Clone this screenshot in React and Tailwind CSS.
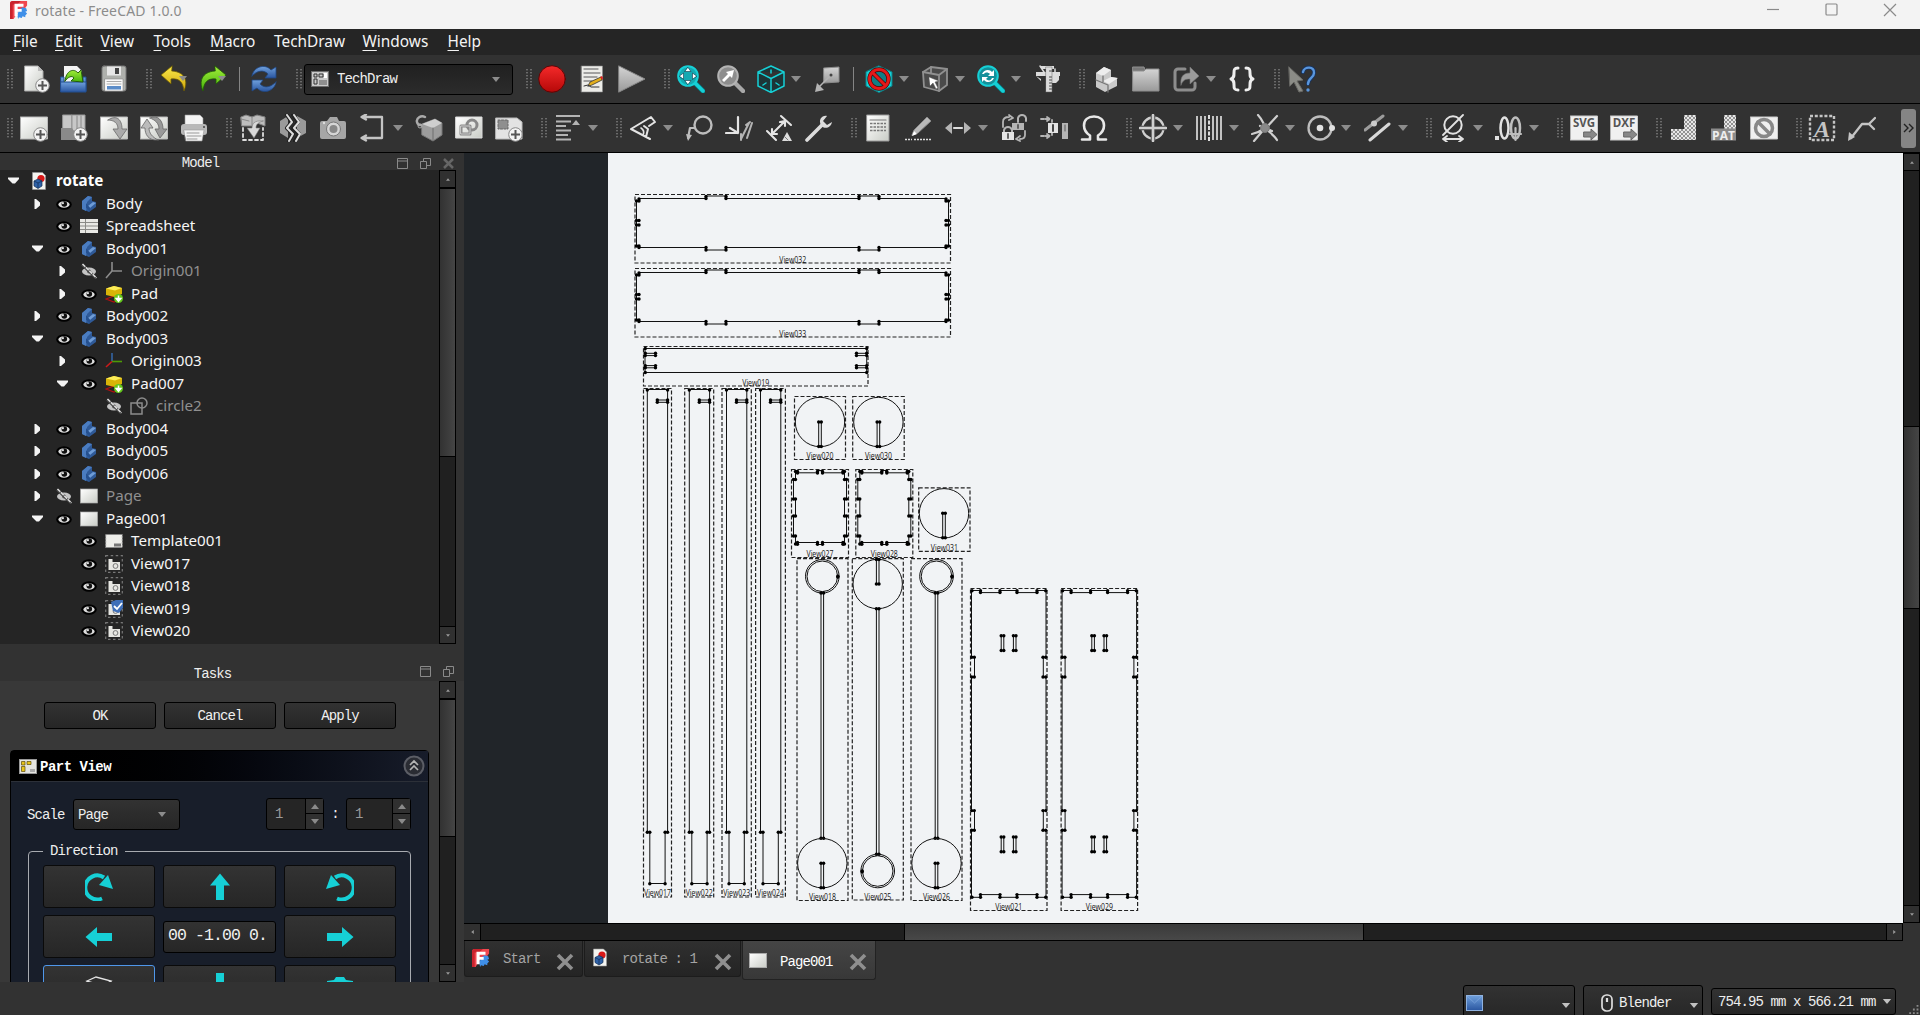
import React from "react";

/* ---------- toolbar primitives ---------- */

function Icon({ children, className = "" }) {
  return (
    <svg viewBox="0 0 28 28" className={"ml-3 h-7 w-7 shrink-0 " + className} fill="none" strokeLinecap="round" strokeLinejoin="round">
      {children}
    </svg>
  );
}

function Handle({ first }) {
  const dots = [];
  for (let r = 0; r < 7; r++) {
    for (let c = 0; c < 2; c++) {
      dots.push(<rect key={r + "-" + c} x={c * 4} y={r * 3} width="2" height="1.4" fill="#6a6a6a" />);
    }
  }
  return (
    <svg viewBox="0 0 6 20" className={(first ? "ml-[7px]" : "ml-[18px]") + " mr-[-5px] h-5 w-1.5 shrink-0"}>
      {dots}
    </svg>
  );
}

function Drop() {
  return (
    <svg viewBox="0 0 10 6" className="ml-1.5 h-1.5 w-2.5 shrink-0">
      <path d="M0 0h10L5 6z" fill="#8c8c8c" />
    </svg>
  );
}

function Sep() {
  return <div className="ml-3 h-6 w-px shrink-0 bg-[#858585]" />;
}

const G = "#b4b4b4";
const L = "#e4e4e4";
const C = "#16d0d6";

function Plus() {
  return (
    <g>
      <circle cx="20.5" cy="20.5" r="6.8" fill="#f2f2f2" stroke="#8a8a8a" />
      <path d="M20.5 16v9M16 20.5h9" stroke="#555" strokeWidth="2" strokeLinecap="butt" />
    </g>
  );
}

function Defs() {
  return (
    <svg className="absolute h-0 w-0">
      <defs>
        <linearGradient id="paper" x1="0" y1="0" x2="1" y2="1">
          <stop offset="0" stopColor="#ffffff" />
          <stop offset="1" stopColor="#c9ccc6" />
        </linearGradient>
        <linearGradient id="steel" x1="0" y1="0" x2="0" y2="1">
          <stop offset="0" stopColor="#d4d4d4" />
          <stop offset="1" stopColor="#9a9a9a" />
        </linearGradient>
        <linearGradient id="red" x1="0" y1="0" x2="0" y2="1">
          <stop offset="0" stopColor="#f52a2a" />
          <stop offset="1" stopColor="#b50808" />
        </linearGradient>
        <linearGradient id="blue" x1="0" y1="0" x2="0" y2="1">
          <stop offset="0" stopColor="#6fa0dc" />
          <stop offset="1" stopColor="#2a56a0" />
        </linearGradient>
        <linearGradient id="yellow" x1="0" y1="0" x2="0" y2="1">
          <stop offset="0" stopColor="#fbe94a" />
          <stop offset="1" stopColor="#d0a60a" />
        </linearGradient>
        <linearGradient id="green" x1="0" y1="0" x2="0" y2="1">
          <stop offset="0" stopColor="#a2ee3a" />
          <stop offset="1" stopColor="#46b20c" />
        </linearGradient>
        <pattern id="hatch" width="4" height="4" patternUnits="userSpaceOnUse">
          <rect width="4" height="4" fill="#e8e8e8" />
          <path d="M0 0L4 4M4 0L0 4" stroke="#7d7d7d" strokeWidth=".8" />
        </pattern>
      </defs>
    </svg>
  );
}

/* ---------- first toolbar ---------- */

function FileToolbar() {
  return (
    <div className="flex h-12 items-center">
      <Handle first />
      <Icon className="ml-[14px]">
        <path d="M3 1h13l5 5v20H3z" fill="url(#paper)" stroke="#aaa" />
        <path d="M16 1v5h5z" fill="#bbb" />
        <Plus />
      </Icon>
      <Icon className="ml-[10px]">
        <path d="M4 1h13l5 5v12H4z" fill="#f4f4f4" />
        <path d="M1 12h3v6h19v-6h3v14H1z" fill="url(#blue)" stroke="#234e90" />
        <path d="M1 17h25v10H1z" fill="url(#blue)" stroke="#234e90" />
        <path d="M5 16C6 5 14 3 18 8l3-3 2 12-12-1 3-3c-2-3-6-1-9 3z" fill="url(#green)" stroke="#226005" />
      </Icon>
      <Icon>
        <rect x="2" y="1" width="24" height="25" rx="2" fill="#aeb0ac" stroke="#777" />
        <rect x="7" y="1.5" width="14" height="9" fill="#e6e6e6" />
        <rect x="15" y="3" width="4" height="6" fill="#444" />
        <rect x="5" y="14" width="18" height="12" fill="#fafafa" stroke="#888" strokeWidth=".6" />
        <path d="M7 16.500h14M7 19h14" stroke="#aaa" />
        <rect x="7" y="21" width="14" height="3.500" fill="#5b8cc8" />
      </Icon>
      <Handle />
      <Icon className="ml-[13px]">
        <path d="M12 1L1 10l10 9v-5c9-1 12 4 13 12 4-9 2-19-12-20z" fill="url(#yellow)" stroke="#6b5a04" strokeWidth=".8" />
        <path d="M19 11h8l-4 5z" fill="#8c8c8c" />
      </Icon>
      <Icon className="ml-[11px]">
        <path d="M16 1l11 9-10 9v-5C8 13 5 18 4 26 0 17 2 7 16 6z" fill="url(#green)" stroke="#1f5c04" strokeWidth=".8" />
        <path d="M19 11h8l-4 5z" fill="#8c8c8c" />
      </Icon>
      <Sep />
      <Icon className="ml-[10px]">
        <path d="M2 11C3 2 15-2 21 5l5-3v11H15l3-4c-5-5-11-3-16 2z" fill="url(#blue)" stroke="#1f4784" strokeWidth=".8" />
        <path d="M26 17c-1 9-13 13-19 6l-5 3V15h11l-3 4c5 5 11 3 16-2z" fill="url(#blue)" stroke="#1f4784" strokeWidth=".8" />
      </Icon>
      <Handle />
      <div className="mr-[-5px] ml-[7px] flex h-[31px] w-[209px] shrink-0 items-center rounded-[3px] border border-black bg-linear-to-b from-[#202020] to-[#2c2c2c] pl-1.5">
        <svg viewBox="0 0 18 16" className="h-4 w-[18px]">
          <rect x=".5" y=".5" width="17" height="15" fill="#c9c9c9" stroke="#6d6d6d" />
          <path d="M3 3h3v3H3zM8 3h4v3H8zM3 8h3v5H3z" fill="none" stroke="#333" />
          <rect x="13" y="2" width="3" height="5" fill="#fff" />
          <rect x="8" y="9" width="8" height="5" fill="#8f8f8f" />
        </svg>
        <span className="mt-px ml-2 font-['Liberation_Mono',monospace] text-[14px] tracking-[-0.9px] text-[#eee]">TechDraw</span>
        <svg viewBox="0 0 10 6" className="mr-3 ml-auto h-[5px] w-2">
          <path d="M0 0h10L5 6z" fill="#8c8c8c" />
        </svg>
      </div>
      <Handle />
      <Icon className="ml-[11px]">
        <circle cx="14" cy="14" r="13.300" fill="url(#red)" stroke="#5c0606" />
      </Icon>
      <Icon>
        <rect x="3.500" y="1" width="21" height="26" fill="#ecece8" stroke="#888" strokeWidth=".6" />
        <path d="M6 4h14M6 8h16M6 12h13M6 16h8" stroke="#888" strokeWidth="1.300" />
        <path d="M10 21l2-4 11-5 1 3-10 5z" fill="#e2ae1c" stroke="#333" strokeWidth=".8" />
        <path d="M22 12l2 3 1-2-1-2z" fill="#d22" />
        <path d="M6 21l4-1 3 2h8" stroke="#333" />
      </Icon>
      <Icon>
        <path d="M1 1l26 13L1 27z" fill="url(#steel)" stroke="#888" />
      </Icon>
      <Handle />
      <Icon>
        <path d="M18 18l8 8" stroke="#067a80" strokeWidth="5" />
        <path d="M18 18l8 8" stroke={C} strokeWidth="3.500" />
        <circle cx="11" cy="11" r="9.800" fill="#14a9b2" stroke={C} strokeWidth="2" />
        <path d="M11 2.500l3 4h-6zM11 19.500l3-4h-6zM2.500 11l4-3v6zM19.500 11l-4-3v6z" fill="#fff" stroke="#134" strokeWidth=".6" />
      </Icon>
      <Icon>
        <path d="M18 18l8 8" stroke="#a8a8a8" strokeWidth="4.500" />
        <circle cx="11" cy="11" r="9.800" fill="#8d8d8d" stroke="#b4b4b4" strokeWidth="2" />
        <path d="M5 15l6-6-2-2 8-2-2 8-2-2-6 6z" fill="#fff" />
      </Icon>
      <Icon>
        <path d="M14 1l13 6v14l-13 6.500L1 21V7z M1 7l13 6.500L27 7M14 13.500V27" stroke={C} strokeWidth="1.500" fill="#1d3537" />
        <path d="M14 5v3M6 20l3-2M19 18l3 2" stroke={C} strokeWidth="1.500" />
      </Icon>
      <Drop />
      <Icon>
        <path d="M11 3l15-1v15l-15 1z" fill="url(#steel)" stroke="#8b8b8b" />
        <path d="M18 10L5 23" stroke={G} strokeWidth="1.500" />
        <path d="M2 27l2-9 7 7z" fill={G} />
        <circle cx="18" cy="10" r="1.500" fill="#444" />
      </Icon>
      <Sep />
      <Icon className="ml-[11px]">
        <path d="M14 1l13 6v14l-13 6.500L1 21V7z" fill={C} stroke="#0b8288" />
        <circle cx="14" cy="14" r="9.500" stroke="#4b0505" strokeWidth="4.300" fill="#117f86" />
        <path d="M7.500 7.500l13 13" stroke="#4b0505" strokeWidth="4.300" />
        <circle cx="14" cy="14" r="9.500" stroke="#e51919" strokeWidth="3" />
        <path d="M7.500 7.500l13 13" stroke="#e51919" strokeWidth="3" />
      </Icon>
      <Drop />
      <Icon>
        <path d="M2 7l8-5 16 2v16l-8 6L3 22z" fill="#4a4a4a" stroke="#909090" strokeWidth="1.800" />
        <path d="M2 7l16 3 8-6M18 10v16M10 2v6" stroke="#909090" strokeWidth="1.800" />
        <path d="M8 12l10 4-4 1 3 6-2 1-3-6-3 3z" fill="#fff" stroke="#555" strokeWidth=".5" />
      </Icon>
      <Drop />
      <Icon>
        <path d="M18 18l8 8" stroke="#067a80" strokeWidth="5" />
        <path d="M18 18l8 8" stroke={C} strokeWidth="3.500" />
        <circle cx="11" cy="11" r="9.800" fill="#14909a" stroke={C} strokeWidth="2" />
        <path d="M5 9c2-5 8-5 10-2l2-2v6h-6l2-2c-2-2-5-2-6 0zM17 13c-2 5-8 5-10 2l-2 2v-5h6l-2 2c2 2 5 2 6-1z" fill="#fff" />
      </Icon>
      <Drop />
      <Icon>
        <path d="M8 1h13v3H8zM3 7h24v4H3zM3 11l5 3v2zM18 18h5l3-3v-4h-8z" fill="#dcdcdc" />
        <path d="M7 1l4 6M22 4v3" stroke="#dcdcdc" strokeWidth="1.500" />
        <rect x="13" y="2" width="6" height="25" fill="#dcdcdc" stroke="#666" strokeWidth=".5" />
        <path d="M16.500 6h2M16.500 12h2M16.500 15h2M16.500 18h2M16.500 21h2M16.500 24h2" stroke="#444" />
      </Icon>
      <Handle />
      <Icon>
        <path d="M4 8l8-6 7 3v7l6 1v8l-12 6-9-5z" fill="#c9c9c9" />
        <path d="M4 8l8-6 7 3-8 6z M11 16l8-4 7 1-9 6z" fill="#ededed" />
        <path d="M11 11v6M4 15l12 5v7" stroke="#777" strokeWidth="1.300" />
      </Icon>
      <Icon>
        <path d="M1 2h11l2 5H1z" fill="#777" stroke="#8f8f8f" />
        <path d="M1 6h11l2-2h13v22H1z" fill="url(#steel)" stroke="#8f8f8f" />
      </Icon>
      <Icon>
        <path d="M13 4H6a3 3 0 00-3 3v15a3 3 0 003 3h14a3 3 0 003-3v-4" stroke="#8d8d8d" strokeWidth="3" />
        <path d="M9 20C8 12 11 8 18 8V2l9 9-9 8v-5c-5 0-7 1-9 6z" fill="#9b9b9b" stroke="#777" strokeWidth=".6" />
      </Icon>
      <Drop />
      <Icon>
        <path d="M10 3C6 3 6 5 6 8s0 5-3 6c3 1 3 3 3 6s0 5 4 5M18 3c4 0 4 2 4 5s0 5 3 6c-3 1-3 3-3 6s0 5-4 5" stroke="#eee" strokeWidth="3" />
      </Icon>
      <Handle />
      <Icon className="ml-[13px]">
        <path d="M1 2l14 13-6 1 6 10-4 1-5-10-4 4z" fill="#8b8c87" stroke="#6a6a66" />
        <path d="M15 7c1-6 12-6 11 1 0 5-6 5-6 11" stroke="#16335f" strokeWidth="4" />
        <path d="M15 7c1-6 12-6 11 1 0 5-6 5-6 11" stroke="#5a96dc" strokeWidth="2.400" />
        <circle cx="20" cy="25" r="1.700" fill="#5a96dc" />
      </Icon>
    </div>
  );
}

/* ---------- second toolbar ---------- */

function DrawToolbar() {
  return (
    <div className="flex h-12 items-center">
      <Handle first />
      <Icon>
        <rect x=".5" y="3" width="27" height="22" fill="url(#paper)" stroke="#bbb" />
        <Plus />
      </Icon>
      <Icon>
        <path d="M3 1h9v16H3zM12 1h13v16H12z" fill="#c7c7c7" stroke="#999" />
        <path d="M17 2v14M21 2v14" stroke="#888" />
        <path d="M1 14h11l2 3h12v9H1z" fill="#8a8a8a" />
        <Plus />
      </Icon>
      <Icon>
        <rect x=".5" y="3" width="27" height="22" fill="url(#paper)" stroke="#bbb" />
        <path d="M8 6c9-6 14 0 14 9h5l-7 10-7-10h5c0-6-4-9-10-9z" fill="#aaa" stroke="#6a6a6a" strokeWidth=".8" />
      </Icon>
      <Icon>
        <rect x=".5" y="3" width="27" height="22" fill="url(#paper)" stroke="#bbb" />
        <path d="M10 4c8-4 13 3 13 11h4l-7 9-5-9h4c0-6-4-9-9-11z" fill="#999" stroke="#666" strokeWidth=".8" />
        <path d="M18 26C8 27 5 20 5 14H1l6-9 6 9H9c0 5 3 9 9 12z" fill="#bbb" stroke="#666" strokeWidth=".8" />
      </Icon>
      <Icon>
        <path d="M5 12V1h15l3 3v8z" fill="#f4f4f4" stroke="#999" strokeWidth=".6" />
        <rect x="1" y="10" width="26" height="11" rx="3" fill="#b9b9b9" />
        <path d="M4 16h20l-2 11H6z" fill="#f4f4f4" stroke="#999" strokeWidth=".6" />
        <path d="M7 19h12M7 22h14M7 25h10" stroke="#999" />
        <circle cx="24" cy="13" r="1" fill="#444" />
      </Icon>
      <Handle />
      <Icon>
        <path d="M2 3l5-2 6 2 5-2 8 2v9L18 9l-5 3H3z" fill="#bdbdbd" stroke="#808080" />
        <path d="M13 3v8M2 5l8 2" stroke="#888" />
        <path d="M4 14v12h20V14" stroke="#ddd" strokeWidth="1.800" strokeDasharray="3 3" />
        <path d="M24 7c-9-1-11 3-11 7h-5l7 10 6-10h-4c0-4 3-6 7-7z" fill="#d8d8d8" stroke="#777" strokeWidth=".6" />
      </Icon>
      <Icon>
        <path d="M1 7l8-5v22l-8-5zM27 7l-9-5v22l9-5z" fill="#9a9a9a" />
        <path d="M8 1l5 7-5 6 6 6-4 7M14 1l5 7-5 6 6 6-4 7" stroke="#222" strokeWidth="4" />
        <path d="M8 1l5 7-5 6 6 6-4 7M15 1l5 7-5 6 6 6-4 7" stroke="#ddd" strokeWidth="2" />
      </Icon>
      <Icon>
        <path d="M3 7h5l3-4h7l2 4h5q2 0 2 2v14q0 2-2 2H3q-2 0-2-2V9q0-2 2-2z" fill="#a6a6a6" />
        <circle cx="14.500" cy="15" r="7" fill="#d5d5d5" stroke="#777" />
        <circle cx="14.500" cy="15" r="4" fill="#888" />
        <circle cx="5" cy="9" r="1.200" fill="#ddd" />
      </Icon>
      <Icon>
        <path d="M5 3h18v21H5M7 .500L2.500 3 7 5.500M7 21.500L2.500 24 7 26.500" stroke="#c4c4c4" strokeWidth="2.300" />
      </Icon>
      <Drop />
      <Icon>
        <path d="M7 10l13-5 7 4v12l-9 6-11-6z" fill="#9c9c9c" stroke="#777" />
        <path d="M7 10l13-5 7 4-9 5z" fill="#cfcfcf" />
        <path d="M18 14v12" stroke="#6f6f6f" />
        <path d="M10 3C6 1 1 4 2 8s3 3 4 3" stroke="#aaa" strokeWidth="2.500" />
        <circle cx="5" cy="12" r="2" stroke="#aaa" />
      </Icon>
      <Icon>
        <rect x="1" y="3" width="26" height="21" fill="url(#paper)" stroke="#ddd" />
        <path d="M6 12h9v8H6z" stroke="#888" strokeWidth="3" />
        <circle cx="17" cy="11" r="5" stroke="#888" strokeWidth="3" />
        <path d="M6 12h9v8H6z" stroke="#ccc" />
      </Icon>
      <Icon>
        <path d="M1 4h21l5 4v17H1z" fill="#e3e3e3" stroke="#bbb" />
        <rect x="3" y="6" width="10" height="9" fill="#8f8f8f" stroke="#666" strokeDasharray="2 1.500" />
        <Plus />
      </Icon>
      <Handle />
      <Icon>
        <path d="M2 2h24M2 7.500h15M2 12h10M2 16.500h15M2 21h12M2 25.500h15" stroke={G} strokeWidth="2" strokeLinecap="butt" />
        <path d="M18 11l4-5 4 5z" fill={G} />
      </Icon>
      <Drop />
      <Handle />
      <Icon>
        <path d="M2 15L22 3l4 5-6 4M2 15l19 10M15 12l4 3-2 8" stroke={L} strokeWidth="2" />
        <path d="M12 14c3 2 3 5 2 7" stroke={L} strokeWidth="1.600" />
      </Icon>
      <Drop />
      <Icon>
        <circle cx="18" cy="11" r="8.500" stroke="#bdbdbd" strokeWidth="2.400" />
        <path d="M10 14H5L3 24" stroke="#bdbdbd" strokeWidth="2.200" />
        <path d="M1 20l2 7 4-6z" fill="#bdbdbd" />
      </Icon>
      <Icon>
        <path d="M13 3v16H1M13 19l-8-5" stroke={L} strokeWidth="2.200" />
        <path d="M16 25L24 9M22 24L27 9M21 11l4-3M16 20v6" stroke={G} strokeWidth="2" />
      </Icon>
      <Icon>
        <path d="M16 2l10 9M2 17l9 9M7 20L20 7M20 7l-5 1M20 7v5M7 20v-5M7 20h5" stroke={L} strokeWidth="2.100" />
        <path d="M22 18l5 9H17z" fill="#ddd" />
        <path d="M20 23l3 3" stroke="#777" />
      </Icon>
      <Icon>
        <path d="M2 26L17 11" stroke="#dcdcdc" strokeWidth="3.600" />
        <path d="M22 2c-5-1-9 4-6 9s10 3 11-3l-5 3-4-4z" fill="#dcdcdc" />
      </Icon>
      <Handle />
      <Icon>
        <rect x="3" y="1" width="22" height="26" fill="url(#paper)" stroke="#999" />
        <path d="M6 6h16" stroke="#777" strokeWidth="1.200" />
        <path d="M6 9.500h16M6 13h16M6 16.500h16" stroke="#777" strokeWidth="1.300" strokeDasharray="2.500 1" strokeLinecap="butt" />
      </Icon>
      <Icon>
        <path d="M1 25.500h7M10 25.500h17" stroke="#ddd" strokeWidth="1.700" strokeDasharray="2 1" strokeLinecap="butt" />
        <path d="M8 21l2-5L23 3l4 4-13 12z" fill="#b9b9b9" stroke="#888" />
        <path d="M8 22l2-5 3 3z" fill="#fff" />
      </Icon>
      <Icon>
        <path d="M1 14l7-6v12zM27 14l-7-6v12z" fill={G} />
        <path d="M10 14h8" stroke="#ddd" strokeWidth="2.200" />
      </Icon>
      <Drop />
      <Icon>
        <path d="M3 13V8q0-5 6-5M9 1l4 3-4 2M25 17v4q0 4-5 4M20 22l-4 3 4 2" stroke={G} strokeWidth="1.800" />
        <path d="M18 8V4q1-3 4-3t4 3v3M4 18v-2q1-3 4-3t4 3v2" stroke={G} strokeWidth="2" />
        <rect x="12" y="9" width="12" height="7" fill={G} />
        <rect x="2" y="18" width="12" height="8" fill={L} />
        <path d="M8 20v4M18 11v3" stroke="#555" strokeWidth="1.800" />
      </Icon>
      <Icon>
        <path d="M1 5h8M7 3l3 2-3 2M1 22h8M7 20l3 2-3 2M12 8V6M12 21v-2" stroke={G} strokeWidth="1.800" strokeDasharray="3 1.500" />
        <rect x="8" y="9" width="10" height="10" fill={L} />
        <path d="M13 11v6" stroke="#444" strokeWidth="2" />
        <rect x="22" y="9" width="6" height="16" fill={G} />
        <path d="M25 11v6" stroke="#555" />
      </Icon>
      <Icon>
        <path d="M2 25.500h8v-4C6 19 4 15 4 11.500 4 6 8 2.500 14 2.500s10 3.500 10 9c0 3.500-2 7.500-6 10v4h8" stroke="#e8e8e8" strokeWidth="2.600" />
      </Icon>
      <Handle />
      <Icon>
        <circle cx="14" cy="14" r="10.500" stroke="#cfcfcf" strokeWidth="2.300" />
        <path d="M14 1v26M1 14h26" stroke="#444" strokeWidth="4.500" strokeLinecap="butt" />
        <path d="M14 1v26M1 14h26" stroke="#cfcfcf" strokeWidth="2.600" />
      </Icon>
      <Drop />
      <Icon>
        <path d="M2 2v24M6 2v24M10 2v24M18 2v24M22 2v24M26 2v24" stroke="#c2c2c2" strokeWidth="2" strokeLinecap="butt" />
        <path d="M14 1v26" stroke="#ddd" strokeWidth="2" strokeDasharray="4 1.500" strokeLinecap="butt" />
      </Icon>
      <Drop />
      <Icon>
        <path d="M7 1c4 4 5 8 8 13L26 2M1 20c5-1 9-3 13-6 4 4 9 7 12 12M3 27l11-13M9 12l12 5" stroke="#cfcfcf" strokeWidth="2.200" />
        <circle cx="14" cy="14" r="4.500" fill="#888" stroke="#777" />
      </Icon>
      <Drop />
      <Icon>
        <circle cx="13" cy="14" r="11.500" stroke="#bdbdbd" strokeWidth="2.300" />
        <circle cx="13" cy="14" r="3.300" fill="#e2e2e2" />
        <circle cx="25" cy="14" r="3" fill="#e2e2e2" />
      </Icon>
      <Drop />
      <Icon className="ml-[13px]">
        <path d="M1 16L19 2" stroke="#9c9c9c" strokeWidth="3" />
        <path d="M6 26L25 10" stroke="#d8d8d8" strokeWidth="3" />
        <circle cx="10" cy="9.500" r="3" fill="#ccc" />
      </Icon>
      <Drop />
      <Handle />
      <Icon>
        <circle cx="14" cy="11" r="8.700" stroke="#e2e2e2" strokeWidth="2" />
        <path d="M4 21L24 1M5 25h18M8 22l-4 3 4 3M20 22l4 3-4 3" stroke="#e2e2e2" strokeWidth="1.800" />
      </Icon>
      <Drop />
      <Icon>
        <rect x="0" y="22" width="4" height="4" fill="#e2e2e2" />
        <ellipse cx="9.500" cy="14" rx="4" ry="10.500" stroke="#e2e2e2" strokeWidth="2.500" />
        <ellipse cx="20.500" cy="14" rx="4.500" ry="10.500" stroke="#bdbdbd" strokeWidth="2.500" />
        <path d="M20.500 14v12M15 20h11" stroke="#bdbdbd" strokeWidth="2.200" />
      </Icon>
      <Drop />
      <Handle />
      <Icon>
        <rect x=".5" y="2" width="27" height="24" fill="#f0f0f0" stroke="#ccc" />
        <text x="14" y="13" textAnchor="middle" className="fill-[#555] font-['Open_Sans',sans-serif] text-[11.500px] font-bold">SVG</text>
        <path d="M14 18h7v-3l6 5.500-6 5.500v-3h-7z" fill="#888" stroke="#666" />
      </Icon>
      <Icon>
        <rect x=".5" y="2" width="27" height="24" fill="#f0f0f0" stroke="#ccc" />
        <text x="14" y="13" textAnchor="middle" className="fill-[#555] font-['Open_Sans',sans-serif] text-[11.500px] font-bold">DXF</text>
        <path d="M14 18h7v-3l6 5.500-6 5.500v-3h-7z" fill="#888" stroke="#666" />
      </Icon>
      <Handle />
      <Icon className="ml-[13px]">
        <path d="M14 1h12v25H1V15h13z" fill="url(#hatch)" />
      </Icon>
      <Icon>
        <path d="M14 1h12v25H1V15h13z" fill="url(#hatch)" />
        <rect x="1" y="14.500" width="25" height="12" fill="#8b8b8b" />
        <text x="13.500" y="25.500" textAnchor="middle" className="fill-[#eee] font-['Open_Sans',sans-serif] text-[12px] font-bold">PAT</text>
      </Icon>
      <Icon>
        <rect x=".5" y="3" width="27" height="22" fill="#f0f0f0" stroke="#ccc" />
        <circle cx="14" cy="14" r="8.500" stroke="#888" strokeWidth="3.500" />
        <path d="M8 8l12 12" stroke="#888" strokeWidth="3.500" />
      </Icon>
      <Handle />
      <Icon className="ml-[11px]">
        <rect x="2" y="2" width="24" height="24" stroke="#c4c4c4" strokeWidth="2.400" strokeDasharray="3 1.800" strokeLinecap="butt" />
        <text x="14" y="22.500" textAnchor="middle" className="fill-[#c4c4c4] font-['Liberation_Serif',serif] text-[24px] font-bold italic">A</text>
      </Icon>
      <Icon>
        <path d="M3 24L14 10h7M27 4l-6 6 5 5" stroke="#c4c4c4" strokeWidth="2.300" />
        <path d="M0 27l1-9 6 5z" fill="#c4c4c4" />
      </Icon>
      <div className="mr-1 ml-auto flex h-[39px] w-[15px] items-center justify-center rounded-[3px] bg-[#858585]">
        <svg viewBox="0 0 12 10" className="h-2.5 w-3" fill="none" stroke="#222" strokeWidth="1.400">
          <path d="M1 1l4 4-4 4M6 1l4 4-4 4" />
        </svg>
      </div>
    </div>
  );
}

/* ---------- small shared pieces ---------- */

function FreeCadLogo({ className }) {
  return (
    <svg viewBox="0 0 20 20" className={className}>
      <path d="M3 0h16v5l-3 4-7 3-5 8H0V3q0-3 3-3z" fill="#f0474f" />
      <path d="M3 0q-3 0-3 3v17h3V4h5l4-4z" fill="#c9232d" />
      <path d="M9 20l-1-5 3-6 3-2 4 1 1 3-2 1 2 2-2 2v2l-3-1-1 2-3-1z" fill="#3f8fe8" />
      <path d="M5 3h10v3.300H8.500v2.500H13v3.200H8.500V17H5z" fill="#fff" />
    </svg>
  );
}

function DocIcon({ className }) {
  return (
    <svg viewBox="0 0 14 18" className={className}>
      <path d="M.5.5h10l3 3v14H.5z" fill="#f4f4f0" stroke="#999" strokeWidth=".6" />
      <circle cx="9" cy="6.500" r="3.600" fill="#d81818" />
      <path d="M2 9l4-2 4 2v5l-4 2.500L2 14z" fill="#2f62a8" stroke="#112c52" strokeWidth=".7" />
      <path d="M2 9l4 2 4-2M6 11v5" fill="none" stroke="#112c52" strokeWidth=".7" />
    </svg>
  );
}

function FloatIcon() {
  return (
    <svg viewBox="0 0 11 11" className="h-[11px] w-[11px]" fill="none" stroke="#8a8a8a">
      <path d="M.5.5h10v10H.5zM.5 3h10" />
    </svg>
  );
}

function DetachIcon() {
  return (
    <svg viewBox="0 0 11 11" className="h-[11px] w-[11px]" fill="none" stroke="#8a8a8a">
      <path d="M.5 3.500h6v7h-6zM3.500 3V.5h7v7H7" />
    </svg>
  );
}

function VScroll({ lead, thumb, className }) {
  return (
    <div className={"flex w-[17px] shrink-0 flex-col border-x border-black bg-[#202020] " + className}>
      <div className="flex h-[18px] shrink-0 items-center justify-center border-y border-black bg-[#303030]">
        <svg viewBox="0 0 6 4" className="h-[3px] w-1"><path d="M0 4h6L3 0z" fill="#999" /></svg>
      </div>
      <div className={lead} />
      <div className={"shrink-0 border-y border-black bg-linear-to-r from-[#323232] to-[#454545] " + thumb} />
      <div className="grow" />
      <div className="flex h-[18px] shrink-0 items-center justify-center border-y border-black bg-[#303030]">
        <svg viewBox="0 0 6 4" className="h-[3px] w-1"><path d="M0 0h6L3 4z" fill="#999" /></svg>
      </div>
    </div>
  );
}

/* ---------- model tree ---------- */

const TREE = [
  [0, "open", "", "doc", "rotate"],
  [1, "closed", "eye", "body", "Body"],
  [1, "", "eye", "sheet", "Spreadsheet"],
  [1, "open", "eye", "body", "Body001"],
  [2, "closed", "hid", "originOff", "Origin001"],
  [2, "closed", "eye", "pad", "Pad"],
  [1, "closed", "eye", "body", "Body002"],
  [1, "open", "eye", "body", "Body003"],
  [2, "closed", "eye", "origin", "Origin003"],
  [2, "open", "eye", "pad", "Pad007"],
  [3, "", "hid", "sketch", "circle2"],
  [1, "closed", "eye", "body", "Body004"],
  [1, "closed", "eye", "body", "Body005"],
  [1, "closed", "eye", "body", "Body006"],
  [1, "closed", "hid", "page", "Page"],
  [1, "open", "eye", "page", "Page001"],
  [2, "", "eye", "template", "Template001"],
  [2, "", "eye", "view", "View017"],
  [2, "", "eye", "view", "View018"],
  [2, "", "eye", "viewOk", "View019"],
  [2, "", "eye", "view", "View020"],
];

const INDENT = ["w-[7px]", "w-[31px]", "w-[56px]", "w-[81px]"];

function TreeGlyph({ kind }) {
  return (
    <svg viewBox="0 0 18 18" className="h-[18px] w-[18px] shrink-0" fill="none">
      {kind === "body" && (
        <g>
          <path d="M2 6l6-5 4 1v4l4 1v5l-7 5-7-3z" fill="#2f5a98" />
          <path d="M2 6l6-5 4 1-5 5v4l-1 5-4-2z" fill="#4a7cc0" />
          <path d="M8 11l5-4 3 1-6 5z" fill="#6f9cd6" />
          <path d="M6 8v5l4 3v-3z" fill="#25508f" />
        </g>
      )}
      {kind === "sheet" && (
        <g>
          <rect x="0" y="2" width="18" height="14" fill="#e8e8e4" />
          <path d="M0 5.500h18M0 9h18M0 12.500h18M5.500 2v14" stroke="#8a8a86" />
        </g>
      )}
      {kind === "originOff" && <path d="M7 0v9h10M7 9l-6 7" stroke="#8c8c8c" strokeWidth="1.600" />}
      {kind === "origin" && (
        <g strokeWidth="1.600">
          <path d="M7 1v8" stroke="#3465a4" />
          <path d="M7 9.500h10" stroke="#4e9a06" />
          <path d="M7 9.500l-6 5.500" stroke="#cc1a1a" />
        </g>
      )}
      {kind === "pad" && (
        <g>
          <path d="M1 14l8-3 8 2-8 4z" stroke="#b01010" strokeWidth="1.300" />
          <path d="M1 3.500L9 1l8 2v6l-7 3-9-2z" fill="#d8b408" />
          <path d="M1 3.500L9 1l8 2-7 2.500z" fill="#fbec58" />
          <circle cx="13.500" cy="13.500" r="4.500" fill="#63c81a" />
          <path d="M13.500 10.500v4M11.200 13.500l2.300 2.800 2.300-2.800z" stroke="#fff" strokeWidth="1.500" fill="#fff" />
        </g>
      )}
      {kind === "sketch" && (
        <g stroke="#8c8c8c" strokeWidth="1.500">
          <rect x="1" y="6" width="11" height="11" />
          <circle cx="12" cy="6" r="5" />
        </g>
      )}
      {kind === "page" && <rect x=".5" y="2" width="17" height="14" fill="url(#paper)" stroke="#aaa" strokeWidth=".7" />}
      {kind === "template" && (
        <g>
          <rect x=".7" y="2.500" width="16.600" height="13" fill="#eeeeea" stroke="#888" strokeDasharray="2 1" />
          <rect x="9" y="11.500" width="7" height="3" fill="#777" />
        </g>
      )}
      {(kind === "view" || kind === "viewOk") && (
        <g>
          <rect x=".7" y=".7" width="16.600" height="16.600" stroke="#777" strokeWidth="1.200" strokeDasharray="2.500 2.500" />
          <path d="M3.500 4h4v3H15v8H3.500z" fill="#e6e6e2" />
          <circle cx="10.500" cy="11" r="2.400" stroke="#777" />
        </g>
      )}
      {kind === "viewOk" && (
        <g>
          <path d="M6 2l5-2h7v8l-4 5-6-2z" fill="#3f6fb8" />
          <path d="M9 6l3 3 5-6" stroke="#fff" strokeWidth="1.800" />
        </g>
      )}
    </svg>
  );
}

function Eye({ hidden }) {
  return (
    <svg viewBox="0 0 16 16" className="h-4 w-4 shrink-0">
      {hidden ? (
        <g>
          <ellipse cx="8" cy="8.500" rx="7" ry="4" fill="#c4c4c4" />
          <circle cx="8" cy="8.500" r="2" fill="#666" />
          <path d="M1 1.500L15 15" stroke="#444" strokeWidth="2.500" />
          <path d="M1.500 1L15.500 15" stroke="#ddd" strokeWidth="1.500" strokeDasharray="4 .8" />
        </g>
      ) : (
        <g>
          <ellipse cx="8" cy="8.500" rx="7.800" ry="5.200" fill="#000" />
          <ellipse cx="8" cy="8.500" rx="5.600" ry="3.200" fill="#ddd" />
          <circle cx="8.300" cy="8" r="2.800" fill="#111" />
          <circle cx="6.900" cy="7.200" r="1.100" fill="#ddd" />
        </g>
      )}
    </svg>
  );
}

function TreeRow({ row }) {
  const [level, arrow, eye, kind, label] = row;
  return (
    <div className="flex h-[22.500px] items-center">
      <div className={"shrink-0 " + INDENT[level]} />
      <svg viewBox="0 0 13 12" className="h-3 w-[13px] shrink-0">
        {arrow === "open" && <path d="M1 2.500h11v1.500L8 8.500H5.500L1 4z" fill="#f4f4f4" />}
        {arrow === "closed" && <path d="M3.500 1H5l4 3.500v3L5 11H3.500z" fill="#f4f4f4" />}
      </svg>
      {level === 0 ? (
        <DocIcon className="mr-[10px] ml-3 h-[18px] w-[14px]" />
      ) : (
        <>
          <div className="ml-3"><Eye hidden={eye === "hid"} /></div>
          <div className="mr-2 ml-2"><TreeGlyph kind={kind} /></div>
        </>
      )}
      <span className={"mb-0.5 font-['Noto_Sans',sans-serif] text-[15.200px] leading-5 whitespace-nowrap " + (level === 0 ? "font-bold text-white" : eye === "hid" ? "text-[#909090]" : "text-[#f6f6f6]")}>
        {label}
      </span>
    </div>
  );
}

/* ---------- tasks panel ---------- */

const MONO = "font-['Liberation_Mono',monospace] text-[14px] tracking-[-0.9px] whitespace-nowrap ";
const BTN = "rounded-[3px] border border-black bg-linear-to-b from-[#323232] to-[#262626] ";

function DirButton({ children, active }) {
  return (
    <div className={(active ? "border-[#4f97ea] " : "border-[#0a0a0a] ") + "flex h-[43px] items-center justify-center rounded-[3px] border bg-linear-to-b from-[#333] to-[#262626]"}>
      <svg viewBox="0 0 28 28" className="h-7 w-7" fill="none">{children}</svg>
    </div>
  );
}

function Spin({ className }) {
  return (
    <div className={"flex h-8 rounded-[3px] border border-black bg-[#252525] " + className}>
      <span className={MONO + "flex grow items-center pl-2 text-[#9a9a9a]"}>1</span>
      <div className="flex w-[18px] flex-col border-l border-black">
        <div className="flex h-[15px] items-center justify-center border-b border-black bg-[#303030]">
          <svg viewBox="0 0 8 5" className="h-[5px] w-2"><path d="M0 5h8L4 0z" fill="#8a8a8a" /></svg>
        </div>
        <div className="flex h-[15px] items-center justify-center bg-[#303030]">
          <svg viewBox="0 0 8 5" className="h-[5px] w-2"><path d="M0 0h8L4 5z" fill="#8a8a8a" /></svg>
        </div>
      </div>
    </div>
  );
}

function Tasks() {
  return (
    <div className="flex h-[301px]">
      <div className="w-[439px] overflow-hidden bg-[#383838]">
        <div className="mt-[21px] ml-11 flex gap-2">
          {["OK", "Cancel", "Apply"].map((t) => (
            <div key={t} className={BTN + MONO + "flex h-[27px] w-28 items-center justify-center pt-0.5 text-[#f0f0f0]"}>{t}</div>
          ))}
        </div>
        <div className="mt-[21px] ml-2.5 h-[260px] w-[419px] rounded-t-[4px] border border-black bg-[#181e2a]">
          <div className="flex h-[31px] items-center border-b border-[#2c3038] bg-linear-to-r from-black to-[#171c2a] pl-2">
            <svg viewBox="0 0 18 15" className="h-[15px] w-[18px]">
              <rect x=".5" y=".5" width="17" height="14" fill="#e4e4e0" stroke="#999" />
              <path d="M2.500 2.500h3.500v3.500H2.500zM8 2.500h4v3H8zM2.500 7.500h3.500v5H2.500z" fill="#e8c41a" stroke="#5a4a08" strokeWidth=".7" />
              <rect x="11" y="10" width="5" height="3" fill="#aaa" />
            </svg>
            <span className="mt-0.5 ml-[3px] font-['Liberation_Mono',monospace] text-[14px] font-bold tracking-[-0.500px] text-white">Part View</span>
            <svg viewBox="0 0 22 22" className="mr-[3px] ml-auto h-[22px] w-[22px]" fill="none">
              <circle cx="11" cy="11" r="9.500" fill="#2a2c33" stroke="#5c5e66" strokeWidth="2" />
              <path d="M7 10l4-4 4 4M7 15l4-4 4 4" stroke="#b4b4b4" strokeWidth="1.700" />
            </svg>
          </div>
          <div className="mt-4 flex h-8 items-center pl-4">
            <span className={MONO + "w-[46px] pt-0.5 text-[#eee]"}>Scale</span>
            <div className={BTN + "flex h-[31px] w-[107px] items-center pl-1"}>
              <span className={MONO + "pt-0.5 text-[#eee]"}>Page</span>
              <svg viewBox="0 0 10 6" className="mr-[13px] ml-auto h-[5px] w-2"><path d="M0 0h10L5 6z" fill="#8c8c8c" /></svg>
            </div>
            <Spin className="ml-[86px] w-[58px]" />
            <span className={MONO + "w-[22px] text-center text-[#eee]"}>:</span>
            <Spin className="w-[65px]" />
          </div>
          <fieldset className="mt-[12px] ml-[17px] h-[200px] w-[383px] rounded-[4px] border border-[#a8abb0] pl-[14px]">
            <legend className={MONO + "px-[7px] leading-[19px] text-[#eee]"}>Direction</legend>
            <div className="mt-1 grid grid-cols-[112px_113px_112px] items-center gap-x-2 gap-y-[7px]">
              <DirButton>
                <path d="M17 25.500a12 12 0 112-21" stroke={C} strokeWidth="4" />
                <path d="M23 2l5 14-14-4z" fill={C} />
              </DirButton>
              <DirButton>
                <path d="M14 .500l10 12h-6V27h-8V12.500H4z" fill={C} />
              </DirButton>
              <DirButton>
                <path d="M11 25.500a12 12 0 10-2-21" stroke={C} strokeWidth="4" />
                <path d="M5 2L0 16l14-4z" fill={C} />
              </DirButton>
              <DirButton>
                <path d="M.500 14L12 4v6h15v8H12v6z" fill={C} />
              </DirButton>
              <div className={BTN + "flex h-8 items-center overflow-hidden pl-1 font-['Liberation_Mono',monospace] text-[16.500px] tracking-[-0.900px] whitespace-pre text-[#f0f0f0]"}>
                00 -1.00 0.
              </div>
              <DirButton>
                <path d="M27.500 14L16 4v6H1v8h15v6z" fill={C} />
              </DirButton>
              <DirButton active>
                <path d="M2 8l9-4 15 4-8 5zM2 8v15l16 4M18 13v14M26 8v14" stroke="#e4e4e4" strokeWidth="1.300" />
              </DirButton>
              <DirButton>
                <path d="M14 27.500L4 15h6V0h8v15h6z" fill={C} />
              </DirButton>
              <DirButton>
                <path d="M1 8l7-1 2-3h8l2 3 7 1v16H1z" fill={C} />
                <circle cx="14" cy="15" r="6" fill="#0b8288" />
              </DirButton>
            </div>
          </fieldset>
        </div>
      </div>
      <VScroll className="h-[301px]" lead="h-0" thumb="h-[138px]" />
      <div className="grow bg-[#363636]" />
    </div>
  );
}

/* ---------- drawing page ---------- */

const dots = (pts) => pts.map(([x, y], i) => <circle key={i} cx={x} cy={y} r="1.700" fill="#000" stroke="none" />);

function Frame({ x, y, w, h, label, lift = 0.5 }) {
  return (
    <g>
      <rect x={x} y={y} width={w} height={h} stroke="#222" strokeWidth="1.200" strokeDasharray="4 2" />
      <text x={x + w / 2 - 13.5} y={y + h - lift} textLength="27" lengthAdjust="spacingAndGlyphs" stroke="none" className="fill-[#111] font-['Open_Sans',sans-serif] text-[9px]">{label}</text>
    </g>
  );
}

function LongPlate({ y, label }) {
  const tabs = [706, 726, 859, 879];
  const side = [201, 220.5, 225, 246];
  return (
    <g transform={"translate(0 " + y + ")"}>
      <Frame x={635} y={194.5} w={315.500} h={68.500} label={label} />
      <path d="M639 198.500H706V196H726V198.500H859V196H879V198.500H946V201H948.500V246H946V247.500H879V250H859V247.500H726V250H706V247.500H639V246H636.500V201H639z" />
      {dots(tabs.flatMap((t) => [[t, 196.5], [t, 198.5], [t, 247.5], [t, 250]]))}
      {dots(side.flatMap((t) => [[636.5, t], [639, t], [946, t], [948.5, t]]))}
      {dots([[639, 199], [946, 199], [639, 247.5], [946, 247.5]])}
    </g>
  );
}

function Strip({ fx, fw, x, label }) {
  return (
    <g>
      <Frame x={fx} y={388.500} w={fw} h={508.500} label={label} lift={1} />
      <path d={`M${x} 832V389.500h20.300V832h-2.500v51.500h-15.300V832z`} />
      <path d={`M${x + 10} 400h10M${x + 10} 402.300h10`} />
      {dots([[x, 390], [x + 20.3, 390], [x + 10, 400], [x + 10, 402.3], [x + 20.3, 400], [x + 20.3, 402.3], [x, 832.3], [x + 2.5, 832.3], [x + 17.8, 832.3], [x + 20.3, 832.3], [x + 2.5, 883.7], [x + 17.8, 883.7]])}
    </g>
  );
}

function Slot({ x, y1, y2 }) {
  return (
    <g>
      <path d={`M${x - 1.3} ${y1}V${y2}M${x + 1.3} ${y1}V${y2}`} />
      {dots([[x - 1.3, y1], [x + 1.3, y1], [x - 1.3, y2], [x + 1.3, y2]])}
    </g>
  );
}

function Disc({ cx, cy, up }) {
  return (
    <g>
      <circle cx={cx} cy={cy} r="24.700" />
      <Slot x={cx} y1={up ? cy - 24.5 : cy} y2={up ? cy : cy + 24.5} />
    </g>
  );
}

function Ring({ cx, cy, dx }) {
  return (
    <g>
      <circle cx={cx} cy={cy} r="16.800" />
      <circle cx={cx} cy={cy} r="15.300" />
      {dots([[cx + dx, cy]])}
      {dots([[cx + dx, cy + 0.7]])}
    </g>
  );
}

function SmallPlate({ dx, label }) {
  const ys = [479.5, 499, 516, 536];
  return (
    <g transform={"translate(" + dx + " 0)"}>
      <Frame x={791.500} y={469.500} w={57} h={88} label={label} />
      <path d="M797 472.800H817V470.500H822V472.800H843V471H844.500V479.500H846.500V499H844.500V516H846.500V536H844.500V543.500H843V542.500H822V544.500H817V542.500H797V543.500H795.500V536H793.500V516H795.500V499H793.500V479.500H795.500V471H797z" />
      {dots(ys.flatMap((y) => [[793.5, y], [795.5, y], [844.5, y], [846.5, y]]))}
      {dots([797.5, 817.5, 822.5, 843].flatMap((x) => [[x, 471.5], [x, 473], [x, 542.5], [x, 544.3]]))}
      {dots([[795.5, 471.5], [844.5, 471.5], [795.5, 544], [844.5, 544]])}
    </g>
  );
}

function BigPlate({ dx, label }) {
  return (
    <g transform={"translate(" + dx + " 0)"}>
      <Frame x={970.500} y={588.500} w={76.500} h={322} label={label} />
      <path d="M971.500 590.500H980.500V592.600H1000V590.500H1017V592.600H1037V590.500H1046V657.300H1043.300V677H1046V810.600H1043.300V830.300H1046V897.300H1037V894.600H1017V897.300H1000V894.600H980.500V897.300H971.500V830.300H974.500V810.600H971.500V677H974.500V657.300H971.500z" />
      {dots([980.5, 1000, 1017, 1037].flatMap((x) => [[x, 590.7], [x, 592.6], [x, 894.6], [x, 897.3]]))}
      {dots([657.3, 677, 810.6, 830.3].flatMap((y) => [[971.7, y], [974.3, y], [1043, y], [1045.7, y]]))}
      {dots([[972, 590.7], [1045.7, 590.7], [972, 897.3], [1045.7, 897.3]])}
      <Slot x={1002.500} y1={635.700} y2={650.500} />
      <Slot x={1014.700} y1={635.700} y2={650.500} />
      <Slot x={1002.500} y1={837} y2={851.700} />
      <Slot x={1014.700} y1={837} y2={851.700} />
    </g>
  );
}

function DrawingPage() {
  return (
    <svg viewBox="608 153 1295 770" className="h-[770px] w-[1295px] bg-[#f1f3f5]" fill="none" stroke="#111" strokeWidth="1">
      <LongPlate y={0} label="View032" />
      <LongPlate y={74} label="View033" />

      <Frame x={643.500} y={346.500} w={224.500} h={39.500} label="View019" />
      <rect x="645" y="348.500" width="221.700" height="24" />
      <path d="M645 353.300h11M645 355.600h11M645 365.600h11M645 367.800h11M856.500 353.300h10M856.500 355.600h10M856.500 365.600h10M856.500 367.800h10" />
      {dots([353.3, 355.6, 365.6, 367.8].flatMap((y) => [[645.3, y], [655.5, y], [856.5, y], [866.7, y]]))}
      {dots([[645.3, 348.5], [866.7, 348.5], [645.3, 372.5], [866.7, 372.5]])}

      <Strip fx={643.500} fw={28} x={647.300} label="View017" />
      <Strip fx={684.700} fw={29} x={689.300} label="View022" />
      <Strip fx={722} fw={29.300} x={726.500} label="View023" />
      <Strip fx={755.600} fw={29.800} x={760.500} label="View024" />

      <Frame x={794.500} y={396.500} w={51} h={63} label="View020" />
      <Disc cx={820} cy={422} />
      <Frame x={852.700} y={396.500} w={51.500} h={63} label="View030" />
      <Disc cx={878.400} cy={422} />
      <Frame x={918.700} y={487.800} w={51.300} h={63.500} label="View031" />
      <Disc cx={944} cy={513.300} />

      <SmallPlate dx={0} label="View027" />
      <SmallPlate dx={64.300} label="View028" />

      <Frame x={797} y={558.700} w={51} h={341.800} label="View018" />
      <Ring cx={822.300} cy={576.300} dx={15.500} />
      <Slot x={822.300} y1={593} y2={838.300} />
      <Disc cx={822.300} cy={863.200} />

      <Frame x={852.300} y={558.700} w={51} h={341.300} label="View025" />
      <Disc cx={877.700} cy={584} up />
      <Slot x={877.700} y1={608.700} y2={854.300} />
      <Ring cx={877.700} cy={871} dx={-15.500} />

      <Frame x={911} y={558.700} w={51} h={341.800} label="View026" />
      <Ring cx={936.500} cy={576.300} dx={15.500} />
      <Slot x={936.500} y1={593} y2={838.300} />
      <Disc cx={936.500} cy={863.200} />

      <BigPlate dx={0} label="View021" />
      <BigPlate dx={90.600} label="View029" />
    </svg>
  );
}

/* ---------- document tabs and status bar ---------- */

function CloseX() {
  return (
    <svg viewBox="0 0 18 18" className="h-[18px] w-[18px]">
      <path d="M2 2l14 14M16 2L2 16" stroke="#8f8f8f" strokeWidth="3.600" fill="none" />
    </svg>
  );
}

function DocTabs() {
  return (
    <div className="flex h-10 items-start">
      <div className="flex h-9 w-[119px] items-center rounded-b-[3px] border border-t-0 border-[#1c1c1c] bg-linear-to-b from-[#303030] to-[#242424] pl-[7px]">
        <FreeCadLogo className="mb-0.5 h-5 w-[18px]" />
        <span className={MONO + "ml-[13px] pt-0.5 text-[#a4a4a4]"}>Start</span>
        <div className="mt-1.5 mr-2 ml-auto"><CloseX /></div>
      </div>
      <div className="ml-px flex h-9 w-[157px] items-center rounded-b-[3px] border border-t-0 border-[#1c1c1c] bg-linear-to-b from-[#303030] to-[#242424] pl-[8px]">
        <DocIcon className="mb-0.5 h-[19px] w-[14px]" />
        <span className={MONO + "ml-[15px] pt-0.5 text-[#a4a4a4]"}>rotate : 1</span>
        <div className="mt-1.5 mr-2 ml-auto"><CloseX /></div>
      </div>
      <div className="ml-px flex h-[39px] w-[134px] items-center rounded-b-[3px] border border-t-0 border-[#222] bg-linear-to-b from-[#454545] to-[#383838] pl-[6px]">
        <svg viewBox="0 0 18 15" className="h-[15px] w-[18px]">
          <rect x=".5" y=".5" width="17" height="14" fill="url(#paper)" stroke="#aaa" />
        </svg>
        <span className={MONO + "ml-[13px] pt-1 text-white"}>Page001</span>
        <div className="mt-1 mr-2 ml-auto"><CloseX /></div>
      </div>
    </div>
  );
}

function StatusBar() {
  const tri = (
    <svg viewBox="0 0 10 6" className="h-[5px] w-2.5"><path d="M0 0h10L5 6z" fill="#c2c2c2" /></svg>
  );
  return (
    <div className="flex h-[30px] items-start justify-end gap-2">
      <div className={BTN + "flex h-9 w-28 items-center pr-[3px] pl-0.5"}>
        <svg viewBox="0 0 17 16" className="h-4 w-[17px]">
          <rect x=".5" y=".5" width="16" height="15" fill="url(#blue)" stroke="#8fb2e0" />
          <path d="M1 1l7.500 7L16 1" fill="none" stroke="#86ace0" strokeWidth=".6" />
        </svg>
        <div className="mt-1 ml-auto">{tri}</div>
      </div>
      <div className={BTN + "flex h-9 w-[120px] items-center pr-[3px] pl-[17px]"}>
        <svg viewBox="0 0 12 18" className="h-[18px] w-3" fill="none" stroke="#ddd" strokeWidth="1.700">
          <rect x="1" y="1" width="10" height="16" rx="4.500" />
          <path d="M6 4v4" strokeWidth="2.200" />
        </svg>
        <span className={MONO + "ml-1.5 text-[#eee]"}>Blender</span>
        <div className="mt-1 ml-auto">{tri}</div>
      </div>
      <div className={BTN + "mt-[3px] flex h-[27px] w-[185px] items-center pr-[3px] pl-1.5"}>
        <span className={MONO + "pt-px text-[#eee]"}>754.95 mm x 566.21 mm</span>
        <div className="ml-auto">{tri}</div>
      </div>
      <svg viewBox="0 0 16 12" className="h-[11px] w-4 self-end">
        <path d="M13 1h2v2h-2zM9 5h2v2H9zM13 5h2v2h-2zM5 9h2v2H5zM9 9h2v2H9zM13 9h2v2h-2z" fill="#8a8a8a" />
      </svg>
    </div>
  );
}

const MENU = [
  ["File", "w-[42px]", true],
  ["Edit", "w-[45.500px]", true],
  ["View", "w-[53px]", true],
  ["Tools", "w-[56.500px]", true],
  ["Macro", "w-[64px]", true],
  ["TechDraw", "w-[88.500px]", false],
  ["Windows", "w-[85px]", true],
  ["Help", "w-[50px]", true],
];

export default function App() {
  return (
    <div className="relative flex h-[1015px] w-[1920px] flex-col overflow-hidden bg-[#323232]">
      <Defs />

      <header className="flex h-[29px] shrink-0 items-start bg-[#f3f3f3]">
        <FreeCadLogo className="ml-[10px] h-5 w-[18px]" />
        <span className="ml-[7px] font-['Noto_Sans',sans-serif] text-[14px] leading-[21px] tracking-[0.150px] text-[#8c8c8c]">rotate - FreeCAD 1.0.0</span>
        <svg viewBox="0 0 130 14" className="mt-[3px] mr-[23px] ml-auto h-[14px] w-[130px]" fill="none" stroke="#8a8a8a" strokeWidth="1.200">
          <path d="M0 6.500h12" />
          <rect x="59" y="1" width="11" height="11" rx="1" />
          <path d="M117 1l12 12M129 1l-12 12" />
        </svg>
      </header>

      <nav className="flex h-[26px] shrink-0 items-center bg-[#252525] pl-[13px] font-['Noto_Sans',sans-serif] text-[15.400px] text-[#f4f4f4]">
        {MENU.map(([label, w, accel]) => (
          <span key={label} className={w + " whitespace-nowrap"}>
            {accel ? <span className="underline underline-offset-[3px]">{label[0]}</span> : label[0]}
            {label.slice(1)}
          </span>
        ))}
      </nav>

      <div className="h-[49px] shrink-0 border-b border-black"><FileToolbar /></div>
      <div className="h-[49px] shrink-0 border-b border-black"><DrawToolbar /></div>

      <main className="flex h-[832px] shrink-0">
        <aside className="flex w-[464px] flex-col">
          <div className="grid h-[17px] grid-cols-[401px_63px] items-center">
            <span className={MONO + "text-center text-[#eee]"}>Model</span>
            <div className="ml-[-4px] flex items-center gap-3">
              <FloatIcon />
              <DetachIcon />
              <svg viewBox="0 0 11 11" className="h-[11px] w-[11px]"><path d="M1 1l9 9M10 1l-9 9" stroke="#666" strokeWidth="2.500" /></svg>
            </div>
          </div>
          <div className="flex h-[474px]">
            <div className="w-[439px] bg-[#252525]">
              {TREE.map((row) => <TreeRow key={row[4]} row={row} />)}
            </div>
            <VScroll className="h-[474px]" lead="h-0" thumb="h-[269px]" />
          </div>
          <div className="grid h-[37px] grid-cols-[425px_39px] items-center pt-5">
            <span className={MONO + "text-center text-[#eee]"}>Tasks</span>
            <div className="ml-[-5px] flex items-center gap-3 pb-1.5">
              <FloatIcon />
              <DetachIcon />
            </div>
          </div>
          <Tasks />
        </aside>

        <section className="flex w-[1456px] flex-col">
          <div className="flex h-[770px]">
            <div className="w-36 bg-[#212529]" />
            <DrawingPage />
            <VScroll className="h-[770px]" lead="h-[255px]" thumb="h-[183px]" />
          </div>
          <div className="flex h-[18px] w-[1439px] border-y border-black bg-[#202020]">
            <div className="flex w-[17px] items-center justify-center border-r border-black bg-[#303030]">
              <svg viewBox="0 0 4 6" className="h-1 w-[3px]"><path d="M4 0v6L0 3z" fill="#999" /></svg>
            </div>
            <div className="w-[423px]" />
            <div className="w-[460px] border-x border-black bg-linear-to-b from-[#3a3a3a] to-[#484848]" />
            <div className="ml-auto flex w-[17px] items-center justify-center border-x border-black bg-[#303030]">
              <svg viewBox="0 0 4 6" className="h-1 w-[3px]"><path d="M0 0v6l4-3z" fill="#999" /></svg>
            </div>
          </div>
          <DocTabs />
        </section>
      </main>

      <StatusBar />
    </div>
  );
}
